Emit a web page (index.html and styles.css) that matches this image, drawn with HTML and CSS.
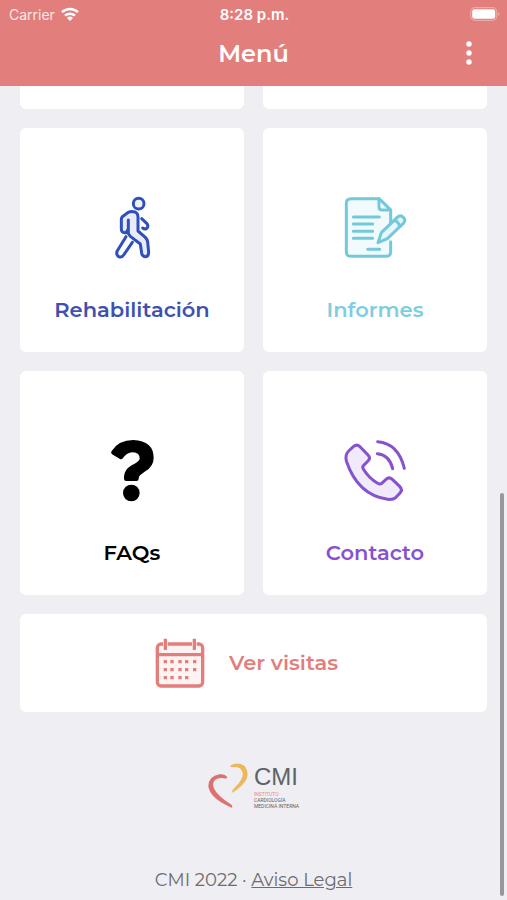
FILE: index.html
```
<!DOCTYPE html>
<html lang="es">
<head>
  <meta charset="UTF-8">
  <meta name="viewport" content="width=device-width, initial-scale=1">
  <title>Menú</title>
  <link rel="stylesheet" href="styles.css">
</head>
<body>
  <header class="header">
    <div class="status">
      <div class="carrier">
        <span>Carrier</span>
        <svg class="wifi" viewBox="0 0 18 14" fill="none" stroke="#fff" stroke-width="2.5">
          <path d="M1 5.2a11.4 11.4 0 0 1 16 0"/>
          <path d="M4 8.7a7.2 7.2 0 0 1 10 0"/>
          <path d="M9 14L6 10.9a4.4 4.4 0 0 1 6 0z" fill="#fff" stroke="none"/>
        </svg>
      </div>
      <span class="time">8:28 p.m.</span>
      <svg class="battery" viewBox="0 0 30 14">
        <rect x=".7" y=".7" width="26" height="12.6" rx="4" fill="none" stroke="#eba9a7" stroke-width="1.2"/>
        <rect x="2.2" y="2.2" width="23" height="9.6" rx="2.4" fill="#fff"/>
        <path d="M28 5v4q1.5-.5 1.5-2T28 5z" fill="#eba9a7"/>
      </svg>
    </div>
    <div class="nav">
      <h1>Menú</h1>
      <button class="more" aria-label="Opciones">
        <svg viewBox="0 0 8 26" fill="#fff">
          <circle cx="4" cy="4" r="2.7"/>
          <circle cx="4" cy="13" r="2.7"/>
          <circle cx="4" cy="22" r="2.7"/>
        </svg>
      </button>
    </div>
  </header>

  <main class="menu">
    <div class="card card-end"></div>
    <div class="card card-end"></div>

    <a class="card rehab" href="#rehabilitacion">
      <svg class="icon" viewBox="30 48 192 192" fill="none" stroke="#2f4fba" stroke-width="9" stroke-linecap="round" stroke-linejoin="round">
        <path d="M97 110l18-13q9-5 20-1q9 4 9 14v43l22 19q6 6 7 14l3 31q0 12-9 13q-10 0-12-10l-4-28-30-23q-8-7-8-16v-3q-3 10-11 8q-8-2-8-11v-28q0-6 3-9z" fill="#e9ebf9"/>
        <path d="M115 120v36"/>
        <path d="M108 170l-26 42q-5 12 4 18q9 4 15-5l26-38"/>
        <path d="M155 116l15 14q6 7 2 13q-6 7-14 1"/>
        <circle cx="146" cy="71" r="16" fill="#f1f3fc"/>
      </svg>
      <span class="label">Rehabilitación</span>
    </a>

    <a class="card reports" href="#informes">
      <svg class="icon" viewBox="40 48 192 192" fill="none" stroke="#73c9dc" stroke-width="9" stroke-linecap="round" stroke-linejoin="round">
        <path d="M183 185v30q0 14-14 14H64q-14 0-14-14V70q0-14 14-14h84l35 34v43" fill="#f1fafc"/>
        <path d="M148 56v24q0 10 10 10h25z" fill="#fff"/>
        <path d="M71 111h78M71 132h58M71 154h58M71 175h58M114 208h36"/>
        <path d="M145 188l10-30 47-45q10-10 19-1q9 9 0 18l-48 46z" fill="#e6f7fa"/>
        <path d="M194 121q9 2 17 18"/>
      </svg>
      <span class="label">Informes</span>
    </a>

    <a class="card faqs" href="#faqs">
      <svg class="icon" viewBox="30 42 192 192" fill="#000">
        <path d="M65 78Q86 45 130 45q61 3 61 54q0 25-25 40l-15 11q-5 4-5 11q0 7-7 7h-30q-7 0-7-7v-6q0-20 23-34q23-12 24-20q1-18-21-19q-13 0-24 11l-5 6q-5 6-10 2L66 88q-5-4-1-10z"/>
        <circle cx="124" cy="204" r="25"/>
      </svg>
      <span class="label">FAQs</span>
    </a>

    <a class="card contact" href="#contacto">
      <svg class="icon" viewBox="40 42 192 192" fill="none" stroke="#8751cf" stroke-width="9" stroke-linecap="round" stroke-linejoin="round">
        <path d="M71 65q10-9 20 0l24 25q9 9 0 18l-13 13q-5 5-1 11q16 27 43 43q7 4 12 0l13-12q9-9 19 0l22 21q10 10 1 20l-12 13q-9 8-25 6Q84 210 50 108q-4-20 7-30z" fill="#f0eafb"/>
        <path d="M144 50q62 5 80 80M143 86q37 4 46 45"/>
      </svg>
      <span class="label">Contacto</span>
    </a>

    <a class="card visits" href="#visitas">
      <svg class="calendar" viewBox="47 54 150 150" fill="none" stroke="#e27e7b" stroke-width="10">
        <rect x="54" y="72" width="136" height="126" rx="11" fill="#fdf3f3"/>
        <path d="M54 104h136"/>
        <path d="M78 56v34M165 56v34" stroke="#fff" stroke-width="14"/>
        <path d="M78 56v34M165 56v34"/>
        <path d="M73 125h10M93 125h10M117 125h10M137 125h10M161 125h10M73 149h10M93 149h10M117 149h10M137 149h10M161 149h10M73 173h10M93 173h10M117 173h10M137 173h10"/>
      </svg>
      <span class="label">Ver visitas</span>
    </a>
  </main>

  <footer class="footer">
    <div class="logo">
      <svg class="heart" viewBox="201 67 120 135">
        <path d="M268 75Q290 62 311 76Q332 104 303 134Q285 151 273 156Q272 150 282 140Q311 112 304 93Q297 76 274 80Q268 80 268 75z" fill="#ebb85c"/>
        <path d="M259 110Q252 99 235 101Q203 106 202 137Q207 174 272 201Q278 197 268 190Q219 158 216 133Q217 110 245 112Q257 116 259 110z" fill="#dc7170"/>
      </svg>
      <div class="brand">
        <span class="brand-name">CMI</span>
        <span class="brand-line brand-red">INSTITUTO</span>
        <span class="brand-line">CARDIOLOGÍA</span>
        <span class="brand-line">MEDICINA INTERNA</span>
      </div>
    </div>
    <p class="legal">CMI 2022 · <a href="#aviso">Aviso Legal</a></p>
  </footer>

  <div class="scrollbar"></div>
</body>
</html>
```
FILE: styles.css
```
* {
  box-sizing: border-box;
}
body {
  margin: 0;
  position: relative;
  min-height: 100vh;
  background: #efeef3;
  font-family: Montserrat, Inter, sans-serif;
}
svg {
  display: block;
}
.header {
  height: 86px;
  background: #e27e7b;
  color: #fff;
}
.status {
  display: grid;
  grid-template-columns: 1fr auto 1fr;
  align-items: center;
  height: 28px;
  padding: 0 7px 0 9px;
  font-family: Inter, sans-serif;
  font-size: 14px;
}
.carrier {
  display: flex;
  align-items: center;
  gap: 6px;
  color: #fbe9e8;
}
.wifi {
  width: 18px;
  height: 14px;
}
.time {
  font-size: 15px;
  font-weight: 600;
}
.battery {
  width: 30px;
  height: 14px;
  justify-self: end;
}
.nav {
  display: grid;
  grid-template-columns: 1fr auto 1fr;
  align-items: center;
  height: 50px;
  padding: 0 30px;
}
.nav h1 {
  grid-column: 2;
  margin: 0;
  font-size: 24px;
  font-weight: 600;
}
.more {
  justify-self: end;
  width: 16px;
  padding: 0 4px;
  border: none;
  background: none;
  cursor: pointer;
}
.menu {
  display: grid;
  grid-template-columns: 1fr 1fr;
  gap: 19px;
  padding: 0 20px;
}
.card {
  display: flex;
  flex-direction: column;
  align-items: center;
  aspect-ratio: 1;
  padding-top: 68px;
  background: #fff;
  border-radius: 6px;
  text-decoration: none;
}
.card-end {
  aspect-ratio: auto;
  height: 23px;
  padding: 0;
  border-radius: 0 0 6px 6px;
}
.icon {
  width: 64px;
  height: 64px;
  margin-bottom: 34px;
}
.label {
  font-size: 21px;
  line-height: 32px;
  font-weight: 600;
}
.rehab {
  color: #3f50ae;
}
.reports {
  color: #7fcde0;
}
.faqs {
  color: #000;
}
.contact {
  color: #8751cf;
}
.visits {
  grid-column: 1 / -1;
  flex-direction: row;
  justify-content: center;
  gap: 24px;
  aspect-ratio: auto;
  height: 98px;
  padding: 0 14px 0 0;
  color: #e27e7b;
}
.calendar {
  width: 50px;
  height: 50px;
}
.footer {
  display: flex;
  flex-direction: column;
  align-items: center;
  gap: 58px;
  padding: 50px 20px 7px;
  color: #6c6c70;
}
.logo {
  display: flex;
  align-items: center;
  gap: 6px;
}
.heart {
  width: 40px;
  height: 45px;
}
.brand {
  display: flex;
  flex-direction: column;
  color: #5c6467;
  font-family: Roboto, sans-serif;
}
.brand-name {
  font-family: "Liberation Sans", sans-serif;
  font-size: 24px;
  line-height: 29px;
}
.brand-line {
  font-size: 5px;
  line-height: 6px;
}
.brand-red {
  color: #e58a8a;
}
.legal {
  margin: 0;
  font-size: 18px;
  line-height: 26px;
}
.legal a {
  color: inherit;
}
.scrollbar {
  position: absolute;
  right: 3px;
  bottom: 4px;
  width: 4px;
  height: 403px;
  border-radius: 2px;
  background: #98979c;
}
```
